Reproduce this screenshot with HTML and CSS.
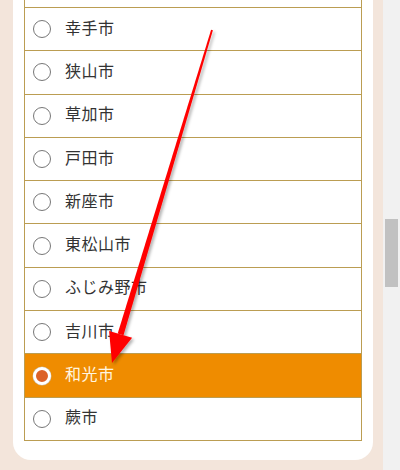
FILE: index.html
```html
<!DOCTYPE html>
<html lang="ja">
<head>
<meta charset="utf-8">
<title>市区町村選択</title>
<link rel="stylesheet" href="styles.css">
</head>
<body>
<div class="page">
  <div class="main">
    <div class="card">
      <ul class="options">
        <li class="option partial"></li>
        <li class="option"><span class="radio"></span><span class="label">幸手市</span></li>
        <li class="option"><span class="radio"></span><span class="label">狭山市</span></li>
        <li class="option"><span class="radio"></span><span class="label">草加市</span></li>
        <li class="option"><span class="radio"></span><span class="label">戸田市</span></li>
        <li class="option"><span class="radio"></span><span class="label">新座市</span></li>
        <li class="option"><span class="radio"></span><span class="label">東松山市</span></li>
        <li class="option"><span class="radio"></span><span class="label">ふじみ野市</span></li>
        <li class="option"><span class="radio"></span><span class="label">吉川市</span></li>
        <li class="option selected"><span class="radio"></span><span class="label">和光市</span></li>
        <li class="option"><span class="radio"></span><span class="label">蕨市</span></li>
      </ul>
    </div>
  </div>
  <div class="scrollbar"><div class="thumb"></div></div>
</div>
<svg class="arrow" width="400" height="470" viewBox="0 0 400 470">
  <defs>
    <filter id="sh" x="-20%" y="-20%" width="140%" height="140%">
      <feDropShadow dx="2" dy="2" stdDeviation="1.5" flood-color="#000" flood-opacity="0.3"/>
    </filter>
  </defs>
  <g filter="url(#sh)" fill="#ff0000">
    <polygon points="212.9,30.3 211.1,29.7 117.7,333.4 123.5,335.2"/>
    <polygon points="112,363 132.1,337.8 109.1,330.9"/>
  </g>
</svg>
</body>
</html>
```
FILE: styles.css
```css
html, body {
  margin: 0;
  padding: 0;
}
body {
  width: 400px;
  height: 470px;
  overflow: hidden;
  font-family: "Noto Sans CJK JP", "Noto Sans", sans-serif;
  font-size: 16px;
  color: #333;
  position: relative;
}
.page {
  display: flex;
  height: 470px;
}
.main {
  flex: 1;
  background: #f3e5db;
  padding: 0 10px 0 13px;
}
.card {
  background: #fff;
  border-radius: 0 0 18px 18px;
  padding: 0 11px 19px 11px;
}
.options {
  list-style: none;
  margin: 0;
  padding: 0;
  border-left: 1px solid #bb9d52;
  border-right: 1px solid #bb9d52;
}
.option {
  box-sizing: border-box;
  height: 43.3px;
  border-bottom: 1px solid #bb9d52;
  display: flex;
  align-items: center;
  padding-left: 8px;
  background: #fff;
}
.option.partial {
  height: 8px;
}
.radio {
  box-sizing: border-box;
  width: 18px;
  height: 18px;
  border-radius: 50%;
  border: 1px solid #777;
  background: #fff;
  margin-right: 14px;
}
.label {
  line-height: 1;
  letter-spacing: 0.5px;
  margin-bottom: 5px;
}
.option.selected {
  background: #ef8c00;
}
.option.selected .label {
  color: #fff6e0;
}
.option.selected .radio {
  border: 3px solid #fff;
  background: #dc6228;
  box-shadow: 0 0 0 0.5px #c9b9a0;
}
.scrollbar {
  width: 17px;
  background: #f1f1f1;
}
.thumb {
  margin: 219px 0 0 2px;
  width: 13px;
  height: 68px;
  background: #c1c1c1;
}
.arrow {
  position: absolute;
  left: 0;
  top: 0;
  pointer-events: none;
}
```
